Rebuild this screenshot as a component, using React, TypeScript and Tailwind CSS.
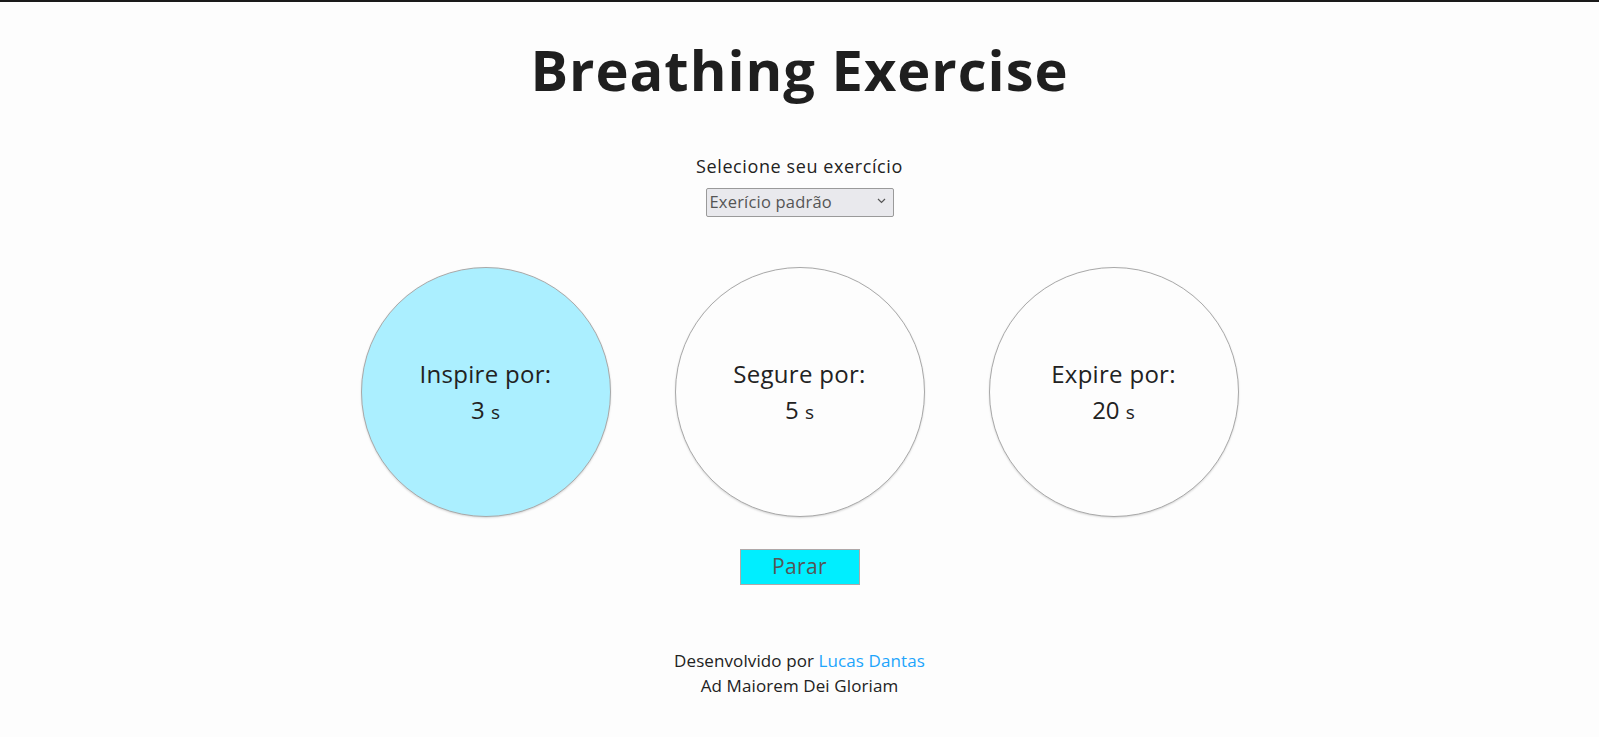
import React from "react";

const font = { fontFamily: '"Open Sans", "Noto Sans", sans-serif' };

function Circle({ label, value, active }: { label: string; value: number; active?: boolean }) {
  return (
    <div
      className={
        "w-[250px] h-[250px] rounded-full border border-[#a9a9a9] shadow-[0_1px_2px_rgba(0,0,0,0.15)] flex flex-col items-center justify-center text-[#222] " +
        (active ? "bg-[#abefff]" : "bg-[#fdfdfd]")
      }
    >
      <div className="text-[24px] leading-[36px] mt-[2px] tracking-[0.3px]">{label}</div>
      <div className="text-[24px] leading-[36px]">
        {value} <span className="text-[19px]">s</span>
      </div>
    </div>
  );
}

export default function App() {
  return (
    <div
      className="min-h-screen bg-[#fdfdfd] border-t-2 border-[#1a1a1a] flex flex-col items-center text-[#1e1e1e]"
      style={font}
    >
      <h1 className="mt-[32px] text-[56px] leading-[70px] font-bold text-[#1f1f1f] tracking-[1px]">
        Breathing Exercise
      </h1>
      <div className="mt-[50px] text-[18px] leading-[24px] text-[#222] tracking-[0.6px]">
        Selecione seu exercício
      </div>
      <div className="relative mt-[10px] w-[188px] h-[29px]">
        <select
          className="appearance-none w-full h-full bg-[#e9e9ed] border border-[#9a9a9a] rounded-[2px] text-[16.5px] text-[#555] pl-[3px] tracking-[0.2px]"
          defaultValue="padrao"
        >
          <option value="padrao">Exerício padrão</option>
        </select>
        <svg
          className="absolute right-[8px] top-[10px] pointer-events-none"
          width="9"
          height="6"
          viewBox="0 0 9 6"
          fill="none"
        >
          <path d="M1 1l3.5 3.5L8 1" stroke="#555" strokeWidth="1.2" />
        </svg>
      </div>
      <div className="mt-[50px] flex gap-[64px]">
        <Circle label="Inspire por:" value={3} active />
        <Circle label="Segure por:" value={5} />
        <Circle label="Expire por:" value={20} />
      </div>
      <button className="mt-[32px] w-[120px] h-[36px] bg-[#00eeff] border border-[#b0a8a8] text-[21px] text-[#555] tracking-[0.4px]">
        Parar
      </button>
      <div className="mt-[63px] flex flex-col items-center text-[17px] leading-[25px] text-[#222] tracking-[0.1px]">
        <div>
          Desenvolvido por <a className="text-[#1ea5fc]">Lucas Dantas</a>
        </div>
        <div>Ad Maiorem Dei Gloriam</div>
      </div>
    </div>
  );
}
